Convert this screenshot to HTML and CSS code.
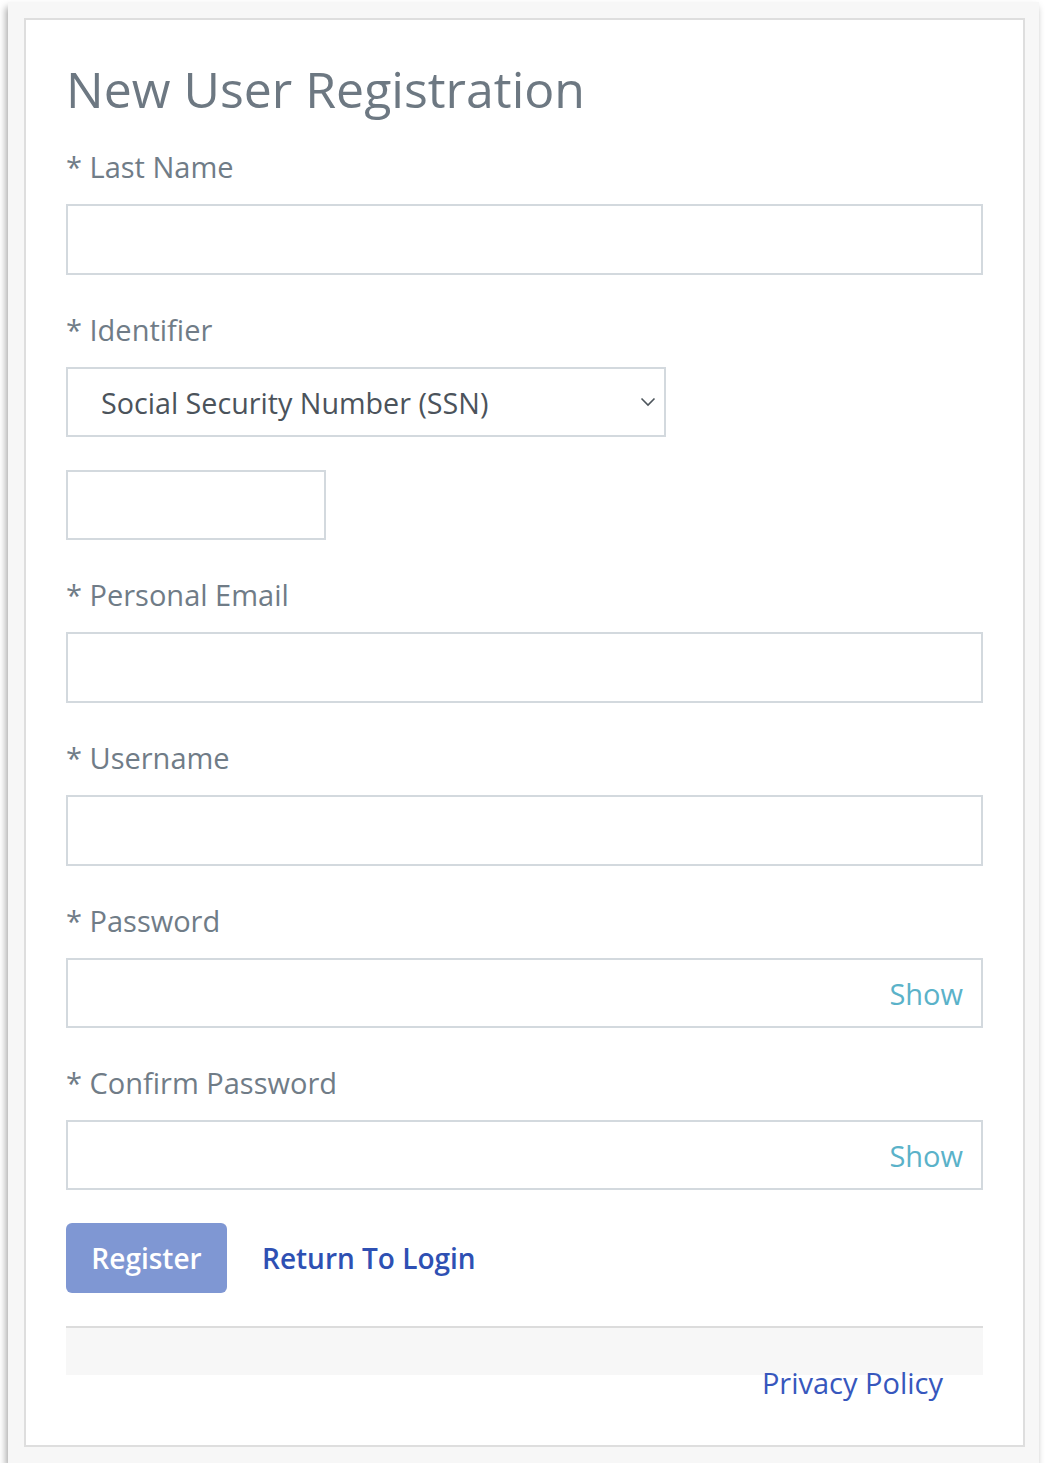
FILE: index.html
```html
<!DOCTYPE html>
<html lang="en">
<head>
<meta charset="utf-8">
<title>New User Registration</title>
<link rel="stylesheet" href="styles.css">
</head>
<body>
<div class="frame">
  <div class="panel">
    <h1 class="title">New User Registration</h1>
    <form class="form">
      <div class="field">
        <label class="label">* Last Name</label>
        <div class="input"></div>
      </div>
      <div class="field">
        <label class="label">* Identifier</label>
        <div class="input select">
          <span class="select-text">Social Security Number (SSN)</span>
          <svg class="chevron" width="16" height="10" viewBox="0 0 16 10"><path d="M1.5 1.5 L8 8 L14.5 1.5" fill="none" stroke="#4d555c" stroke-width="1.6"/></svg>
        </div>
        <div class="input short"></div>
      </div>
      <div class="field">
        <label class="label">* Personal Email</label>
        <div class="input"></div>
      </div>
      <div class="field">
        <label class="label">* Username</label>
        <div class="input"></div>
      </div>
      <div class="field">
        <label class="label">* Password</label>
        <div class="input pw"><span class="show">Show</span></div>
      </div>
      <div class="field">
        <label class="label">* Confirm Password</label>
        <div class="input pw"><span class="show">Show</span></div>
      </div>
      <div class="actions">
        <span class="btn">Register</span>
        <a class="return" href="#">Return To Login</a>
      </div>
    </form>
    <div class="footer">
      <a class="privacy" href="#">Privacy Policy</a>
    </div>
  </div>
</div>
</body>
</html>
```
FILE: styles.css
```css
html, body {
  margin: 0;
  padding: 0;
  background: #ffffff;
}
body {
  font-family: "Open Sans", "Liberation Sans", sans-serif;
  padding: 2px 0 0 8px;
}
.frame {
  width: 1001px;
  padding: 16px 14px 16px 16px;
  background: #f7f7f7;
  box-shadow: -2px 5px 7px rgba(0,0,0,0.35);
}
.panel {
  background: #ffffff;
  border: 2px solid #dedede;
  padding: 37px 40px 70px 40px;
}
.title {
  margin: 0 0 26px 0;
  font-size: 50px;
  line-height: 64px;
  font-weight: 400;
  color: #6d7882;
  letter-spacing: 0;
}
.form {
  display: flex;
  flex-direction: column;
}
.field {
  display: flex;
  flex-direction: column;
  margin-bottom: 35px;
}
.label {
  font-size: 29px;
  line-height: 40px;
  color: #707c87;
  margin-bottom: 17px;
}
.input {
  box-sizing: border-box;
  height: 71px;
  border: 2px solid #d3d9de;
  background: #fff;
}
.select {
  width: 600px;
  display: flex;
  align-items: center;
  justify-content: space-between;
  padding: 0 8px 0 33px;
  height: 70px;
}
.select-text {
  font-size: 28.7px;
  color: #4b535b;
}
.short {
  width: 260px;
  height: 70px;
  margin-top: 33px;
}
.pw {
  display: flex;
  align-items: center;
  justify-content: flex-end;
  padding-right: 18px;
  height: 70px;
}
.show {
  font-size: 29px;
  color: #5ab2c9;
}
.actions {
  display: flex;
  align-items: center;
  gap: 35px;
  margin-top: -2px;
  margin-bottom: 33px;
}
.btn {
  display: flex;
  align-items: center;
  justify-content: center;
  width: 161px;
  height: 70px;
  background: #7f97d3;
  color: #fff;
  border-radius: 6px;
  font-size: 28px;
  font-weight: 600;
}
.return {
  font-size: 28px;
  font-weight: 600;
  color: #2e50b3;
  text-decoration: none;
}
.footer {
  height: 47px;
  border-top: 2px solid #dcdcdc;
  background: #f7f7f7;
  display: flex;
  justify-content: flex-end;
  align-items: flex-start;
  padding-right: 40px;
}
.privacy {
  font-size: 29px;
  line-height: 40px;
  margin-top: 35px;
  color: #3757bd;
  text-decoration: none;
}
```
